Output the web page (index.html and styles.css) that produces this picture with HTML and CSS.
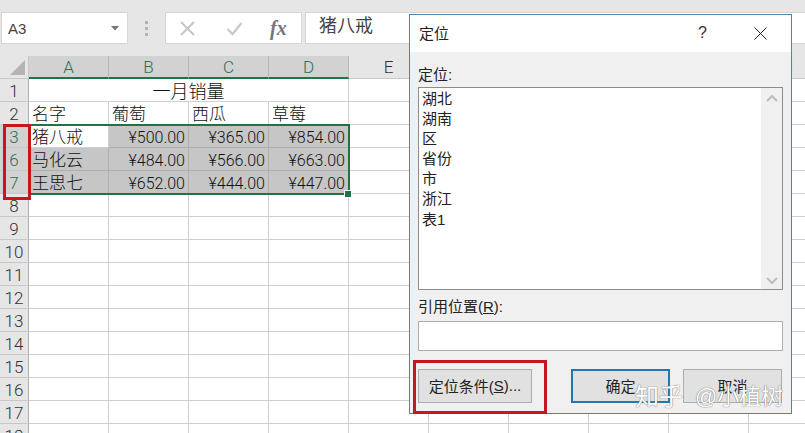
FILE: index.html
```html
<!DOCTYPE html>
<html lang="zh">
<head>
<meta charset="utf-8">
<title>定位</title>
<link rel="stylesheet" href="styles.css">
</head>
<body>
<div class="app">
  <div class="toolbar">
    <div class="namebox"><span>A3</span><svg class="caret" width="8" height="5" viewBox="0 0 8 5"><path d="M0 0h8L4 4.5z"/></svg></div>
    <div class="grip"><i></i><i></i><i></i></div>
    <div class="fxbtns">
      <svg width="17" height="17" viewBox="0 0 17 17"><path d="M2 2l13 13M15 2L2 15"/></svg>
      <svg width="17" height="17" viewBox="0 0 17 17"><path d="M1.500 9l5 5L15.500 3"/></svg>
      <span class="fx">fx</span>
    </div>
    <div class="formula">猪八戒</div>
  </div>
  <div class="sheet">
    <div class="colheads">
      <div class="corner"><svg width="29" height="21" viewBox="0 0 29 21"><path d="M10 19L25 4v15z"/></svg></div>
      <div class="ch on">A</div><div class="ch on">B</div><div class="ch on">C</div><div class="ch on">D</div>
      <div class="ch">E</div><div class="ch">F</div><div class="ch">G</div><div class="ch">H</div><div class="ch">I</div><div class="ch">J</div><div class="ch">K</div>
    </div>
    <div class="row"><div class="rh">1</div><div class="c span4 mid">一月销量</div><div class="c"></div><div class="rest"></div></div>
    <div class="row"><div class="rh">2</div><div class="c">名字</div><div class="c">葡萄</div><div class="c">西瓜</div><div class="c">草莓</div><div class="c"></div><div class="rest"></div></div>
    <div class="row"><div class="rh on">3</div><div class="c">猪八戒</div><div class="c sel num">¥500.00</div><div class="c sel num">¥365.00</div><div class="c sel num">¥854.00</div><div class="c"></div><div class="rest"></div></div>
    <div class="row"><div class="rh on">6</div><div class="c sel">马化云</div><div class="c sel num">¥484.00</div><div class="c sel num">¥566.00</div><div class="c sel num">¥663.00</div><div class="c"></div><div class="rest"></div></div>
    <div class="row"><div class="rh on">7</div><div class="c sel">王思七</div><div class="c sel num">¥652.00</div><div class="c sel num">¥444.00</div><div class="c sel num">¥447.00</div><div class="c"></div><div class="rest"></div></div>
    <div class="row"><div class="rh">8</div><div class="rest"></div></div>
    <div class="row"><div class="rh">9</div><div class="rest"></div></div>
    <div class="row"><div class="rh">10</div><div class="rest"></div></div>
    <div class="row"><div class="rh">11</div><div class="rest"></div></div>
    <div class="row"><div class="rh">12</div><div class="rest"></div></div>
    <div class="row"><div class="rh">13</div><div class="rest"></div></div>
    <div class="row"><div class="rh">14</div><div class="rest"></div></div>
    <div class="row"><div class="rh">15</div><div class="rest"></div></div>
    <div class="row"><div class="rh">16</div><div class="rest"></div></div>
    <div class="row"><div class="rh">17</div><div class="rest"></div></div>
    <div class="row"><div class="rh">18</div><div class="rest"></div></div>
    <div class="selection"><div class="handle"></div></div>
  </div>

  <div class="dialog">
    <div class="titlebar">
      <span class="title">定位</span>
      <span class="help">?</span>
      <svg class="close" width="13" height="13" viewBox="0 0 13 13"><path d="M.5.5l12 12M12.500.5l-12 12"/></svg>
    </div>
    <div class="body">
      <div class="label">定位:</div>
      <div class="list">
        <div class="items">
          <div>湖北</div><div>湖南</div><div>区</div><div>省份</div><div>市</div><div>浙江</div><div>表1</div>
        </div>
        <div class="scroll">
          <svg width="12" height="7" viewBox="0 0 12 7"><path d="M1 6l5-5 5 5"/></svg>
          <svg width="12" height="7" viewBox="0 0 12 7"><path d="M1 1l5 5 5-5"/></svg>
        </div>
      </div>
      <div class="label ref">引用位置(<u>R</u>):</div>
      <div class="input"></div>
      <div class="buttons">
        <div class="btn goto">定位条件(<u>S</u>)...</div>
        <div class="btn ok">确定</div>
        <div class="btn cancel">取消</div>
      </div>
    </div>
  </div>

  <div class="mark mark-rows"></div>
  <div class="mark mark-btn"></div>
  <div class="watermark"><span class="wm-zh">知乎</span>@小植树</div>
</div>
</body>
</html>
```
FILE: styles.css
```css
* { box-sizing: border-box; }
html, body { margin: 0; height: 100%; }
body {
  overflow: hidden;
  background: #fff;
  font-family: "Liberation Sans", "Noto Sans CJK SC", sans-serif;
  color: #222;
}
.app { position: relative; width: 805px; height: 433px; overflow: hidden; }

/* toolbar */
.toolbar {
  height: 56px;
  background: #e6e6e6;
  padding: 12px 0 12px 1px;
  display: flex;
  align-items: stretch;
}
.namebox {
  width: 127px;
  background: #fff;
  border: 1px solid #d6d6d6;
  display: flex;
  align-items: center;
  justify-content: space-between;
  padding: 0 8px 0 6px;
  font-size: 15px;
  color: #444;
}
.caret path { fill: #777; }
.grip {
  width: 37px;
  display: flex;
  flex-direction: column;
  align-items: center;
  justify-content: center;
  gap: 3px;
}
.grip i { width: 3px; height: 3px; background: #b4b4b4; }
.fxbtns {
  width: 137px;
  background: #fff;
  border: 1px solid #d6d6d6;
  display: flex;
  align-items: center;
  gap: 30px;
  padding-left: 13px;
}
.fxbtns svg { flex: none; }
.fxbtns path { fill: none; stroke: #c8c8c8; stroke-width: 2.200; }
.fx {
  font-family: "Liberation Serif", serif;
  font-style: italic;
  font-weight: 700;
  font-size: 20px;
  color: #777;
  margin-left: -3px;
}
.formula {
  flex: 1;
  margin-left: 3px;
  background: #fff;
  border: 1px solid #d6d6d6;
  border-right: 0;
  padding: 0 0 0 13px;
  font-size: 18px;
  line-height: 27px;
  color: #444;
}

/* sheet */
.sheet { position: relative; font-family: Roboto, "Liberation Sans", "Noto Sans CJK SC", sans-serif; font-weight: 300; }
.colheads { display: flex; height: 23px; background: #e6e6e6; }
.corner { width: 29px; flex: none; border-right: 1px solid #c8c8c8; border-bottom: 1px solid #c8c8c8; }
.corner svg { display: block; }
.corner path { fill: #b4b4b4; }
.ch {
  width: 80px;
  flex: none;
  text-align: center;
  font-size: 17px;
  line-height: 22px;
  color: #333;
  border-right: 1px solid #c8c8c8;
  border-bottom: 1px solid #c8c8c8;
}
.ch.on {
  background: #d2d2d2;
  color: #2f6e50;
  border-bottom: 2px solid #217346;
  border-right-color: #b8b8b8;
}
.row { display: flex; height: 23px; }
.rh {
  width: 29px;
  flex: none;
  background: #e6e6e6;
  border-right: 1px solid #b0b0b0;
  border-bottom: 1px solid #c8c8c8;
  text-align: center;
  font-size: 17px;
  line-height: 25px;
  color: #333;
}
.rh.on { background: #d2d2d2; color: #2f6e50; }
.c {
  width: 80px;
  flex: none;
  border-right: 1px solid #d0d0d0;
  border-bottom: 1px solid #d0d0d0;
  padding: 0 3px;
  font-size: 17px;
  line-height: 25px;
  white-space: nowrap;
  overflow: hidden;
  color: #111;
}
.span4 { width: 320px; font-size: 18px; }
.mid { text-align: center; }
.num { text-align: right; font-size: 16px; }
.sel { background: #c6c6c6; border-color: #aeaeae; }
.rest {
  flex: 1;
  border-bottom: 1px solid #d0d0d0;
  background: repeating-linear-gradient(to right, transparent 0, transparent 79px, #d0d0d0 79px, #d0d0d0 80px);
}
.selection {
  position: absolute;
  left: 29px;
  top: 68px;
  width: 321px;
  height: 71px;
  border: 2px solid #217346;
  pointer-events: none;
}
.handle {
  position: absolute;
  right: -3px;
  bottom: -4px;
  width: 6px;
  height: 6px;
  background: #217346;
  outline: 1px solid #fff;
}

/* dialog */
.dialog {
  position: absolute;
  left: 409px;
  top: 14px;
  width: 383px;
  height: 400px;
  background: #f0f0f0;
  border: 1px solid #4f86a8;
  display: flex;
  flex-direction: column;
}
.titlebar {
  height: 37px;
  flex: none;
  background: #fff;
  display: flex;
  align-items: center;
  padding: 0 24px 2px 9px;
  font-size: 15px;
}
.title { flex: 1; }
.help { font-size: 16px; margin-right: 47px; color: #333; }
.close { margin-top: 2px; }
.close path { fill: none; stroke: #222; stroke-width: 1; }
.body {
  flex: 1;
  padding: 12px 8px 10px 8px;
  display: flex;
  flex-direction: column;
  font-size: 15px;
}
.label { line-height: 21px; height: 23px; }
.list {
  height: 203px;
  flex: none;
  background: #fff;
  border: 1px solid #8c8c8c;
  display: flex;
}
.items { flex: 1; padding: 1px 3px; line-height: 20.100px; }
.scroll {
  width: 21px;
  flex: none;
  background: #f0f0f0;
  display: flex;
  flex-direction: column;
  justify-content: space-between;
  align-items: center;
  padding: 7px 0 5px;
}
.scroll path { fill: none; stroke: #bdbdbd; stroke-width: 2; }
.ref { margin-top: 6px; height: 25px; line-height: 22px; }
.input { height: 30px; flex: none; background: #fff; border: 1px solid #adadad; }
.buttons { display: flex; margin-top: 18px; height: 34px; }
.btn {
  background: #e1e1e1;
  border: 1px solid #adadad;
  display: flex;
  align-items: center;
  justify-content: center;
  white-space: pre;
  padding-bottom: 2px;
}
.goto { width: 114px; }
.ok { width: 99px; margin-left: 39px; border: 2px solid #1f78b4; }
.cancel { width: 99px; margin-left: 13px; }

/* annotations */
.mark { position: absolute; border: 3px solid #c8161d; }
.mark-rows { left: 3px; top: 124px; width: 28px; height: 76px; }
.mark-btn { left: 413px; top: 360px; width: 134px; height: 54px; }
.watermark {
  position: absolute;
  left: 635px;
  top: 381px;
  font-size: 22px;
  line-height: 32px;
  white-space: nowrap;
  color: #fff;
  text-shadow: 0 0 1px #777, 0 0 1px #777;
  display: flex;
  align-items: center;
  gap: 12px;
}
.wm-zh { font-size: 24px; }
```
